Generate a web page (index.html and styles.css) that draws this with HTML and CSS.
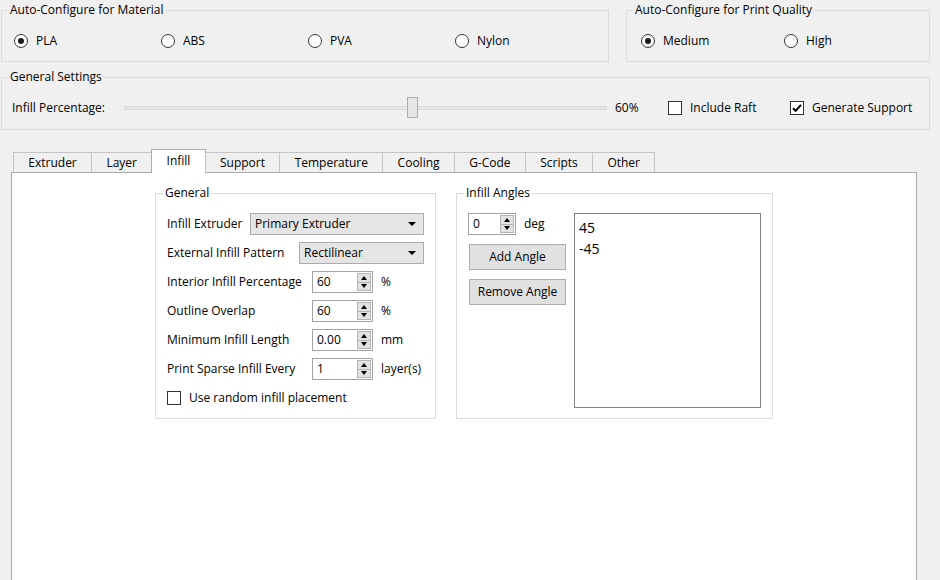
FILE: index.html
```html
<!DOCTYPE html>
<html lang="en">
<head>
  <meta charset="UTF-8">
  <title>Print Settings - Infill</title>
  <link rel="stylesheet" href="styles.css">
</head>
<body>
<div class="window">

  <div class="top-row">
    <fieldset class="group material">
      <legend>Auto-Configure for Material</legend>
      <div class="radio-row">
        <span class="radio"><span class="circle on"></span>PLA</span>
        <span class="radio"><span class="circle"></span>ABS</span>
        <span class="radio"><span class="circle"></span>PVA</span>
        <span class="radio"><span class="circle"></span>Nylon</span>
      </div>
    </fieldset>

    <fieldset class="group quality">
      <legend>Auto-Configure for Print Quality</legend>
      <div class="radio-row">
        <span class="radio"><span class="circle on"></span>Medium</span>
        <span class="radio"><span class="circle"></span>High</span>
      </div>
    </fieldset>
  </div>

  <fieldset class="group general-settings">
    <legend>General Settings</legend>
    <div class="settings-row">
      <span class="slider-label">Infill Percentage:</span>
      <div class="slider">
        <div class="groove"></div>
        <div class="handle"></div>
      </div>
      <span class="slider-value">60%</span>
      <span class="check raft"><span class="box"></span>Include Raft</span>
      <span class="check">
        <span class="box">
          <svg width="12" height="12" viewBox="0 0 12 12"><path d="M2 6.2 L4.6 8.8 L10 2.8" fill="none" stroke="#000" stroke-width="2"/></svg>
        </span>Generate Support
      </span>
    </div>
  </fieldset>

  <div class="tabs">
    <div class="tab">Extruder</div>
    <div class="tab">Layer</div>
    <div class="tab active">Infill</div>
    <div class="tab">Support</div>
    <div class="tab">Temperature</div>
    <div class="tab">Cooling</div>
    <div class="tab">G-Code</div>
    <div class="tab">Scripts</div>
    <div class="tab">Other</div>
  </div>

  <div class="tab-pane">

    <fieldset class="group inner general">
      <legend>General</legend>
      <div class="form">
        <div class="combo-row">
          <span>Infill Extruder</span>
          <div class="combo wide">Primary Extruder</div>
        </div>
        <div class="combo-row">
          <span>External Infill Pattern</span>
          <div class="combo narrow">Rectilinear</div>
        </div>
        <div class="spin-row">
          <span>Interior Infill Percentage</span>
          <div class="spin"><span class="spin-text">60</span><span class="spin-buttons"><span class="up"></span><span class="down"></span></span></div>
          <span>%</span>
        </div>
        <div class="spin-row">
          <span>Outline Overlap</span>
          <div class="spin"><span class="spin-text">60</span><span class="spin-buttons"><span class="up"></span><span class="down"></span></span></div>
          <span>%</span>
        </div>
        <div class="spin-row">
          <span>Minimum Infill Length</span>
          <div class="spin"><span class="spin-text">0.00</span><span class="spin-buttons"><span class="up"></span><span class="down"></span></span></div>
          <span>mm</span>
        </div>
        <div class="spin-row">
          <span>Print Sparse Infill Every</span>
          <div class="spin"><span class="spin-text">1</span><span class="spin-buttons"><span class="up"></span><span class="down"></span></span></div>
          <span>layer(s)</span>
        </div>
        <div class="check check-row"><span class="box"></span>Use random infill placement</div>
      </div>
    </fieldset>

    <fieldset class="group inner angles">
      <legend>Infill Angles</legend>
      <div class="angles-body">
        <div class="angle-col">
          <div class="angle-spin-row">
            <div class="spin small"><span class="spin-text">0</span><span class="spin-buttons"><span class="up"></span><span class="down"></span></span></div>
            <span>deg</span>
          </div>
          <div class="btn">Add Angle</div>
          <div class="btn">Remove Angle</div>
        </div>
        <div class="angle-list">
          <div class="angle-item">45</div>
          <div class="angle-item">-45</div>
        </div>
      </div>
    </fieldset>

  </div>
</div>
</body>
</html>
```

FILE: styles.css
```css
* {
  box-sizing: border-box;
}
body {
  margin: 0;
  background: #f0f0f0;
  font-family: "Open Sans", "Segoe UI", Arial, sans-serif;
  font-size: 12px;
  line-height: 16px;
  color: #000;
  height: 580px;
  overflow: hidden;
}
.window {
  padding: 2px 0 0 1px;
}

/* group boxes */
.group {
  margin: 0;
  padding: 0 10px;
  border: 1px solid #dcdcdc;
  min-width: 0;
}
.group legend {
  padding: 0 2px;
  margin-left: -4px;
  line-height: 16px;
}
.top-row {
  display: flex;
  gap: 17px;
}
.material {
  width: 608px;
  padding-top: 15px;
  padding-bottom: 12px;
}
.quality {
  width: 304px;
  padding-top: 15px;
  padding-bottom: 12px;
}

/* radio buttons */
.radio-row {
  display: grid;
  grid-template-columns: repeat(4, 147px);
  padding-left: 2px;
}
.quality .radio-row {
  grid-template-columns: repeat(2, 143px);
  padding-left: 4px;
}
.radio {
  display: flex;
  align-items: center;
  gap: 8px;
  height: 16px;
}
.circle {
  width: 14px;
  height: 14px;
  border: 1px solid #333;
  border-radius: 50%;
  background: #fff;
  display: flex;
  align-items: center;
  justify-content: center;
}
.circle.on::after {
  content: "";
  width: 6px;
  height: 6px;
  border-radius: 50%;
  background: #1b1b1b;
}

/* general settings */
.general-settings {
  width: 929px;
  margin-top: 7px;
  padding-top: 12px;
  padding-bottom: 10px;
}
.settings-row {
  display: flex;
  align-items: center;
  height: 22px;
}
.slider-label {
  width: 112px;
}
.slider {
  width: 483px;
  height: 22px;
  position: relative;
  display: flex;
  align-items: center;
}
.groove {
  flex: 1;
  height: 4px;
  border: 1px solid #d9d9d9;
  background: #e7e7e7;
}
.handle {
  position: absolute;
  left: 283px;
  top: 0;
  width: 11px;
  height: 21px;
  border: 1px solid #acacac;
  background: #e6e6e6;
}
.slider-value {
  width: 61px;
  padding-left: 8px;
}
.check {
  display: flex;
  align-items: center;
  gap: 8px;
}
.raft {
  width: 122px;
}
.box {
  width: 14px;
  height: 14px;
  border: 1px solid #333;
  background: #fff;
  display: flex;
  align-items: center;
  justify-content: center;
}

/* tabs */
.tabs {
  display: flex;
  align-items: flex-end;
  height: 24px;
  margin: 19px 0 0 12px;
  position: relative;
  z-index: 1;
}
.tab {
  height: 20px;
  line-height: 19px;
  padding: 0 14.3px;
  margin-left: -1px;
  margin-bottom: 1px;
  border: 1px solid #c4c4c4;
  border-bottom: none;
  background: #f0f0f0;
}
.tab:first-child {
  margin-left: 0;
}
.tab.active {
  height: 24px;
  line-height: 22px;
  margin-bottom: 0;
  background: #fff;
  border-color: #adadad;
}
.tab-pane {
  width: 906px;
  height: 430px;
  margin: -1px 0 0 10px;
  padding-top: 12px;
  border: 1px solid #a9a9a9;
  background: #fff;
  display: flex;
  justify-content: center;
  align-items: flex-start;
  gap: 20px;
}

/* inner groups */
.inner {
  height: 234px;
  padding: 12px 11px 0;
}
.general {
  width: 281px;
}
.angles {
  width: 317px;
}
.form {
  display: flex;
  flex-direction: column;
  gap: 7px;
}
.combo-row {
  display: flex;
  align-items: center;
  justify-content: space-between;
  height: 22px;
}
.combo {
  height: 22px;
  border: 1px solid #acacac;
  background: #e5e5e5;
  display: flex;
  align-items: center;
  justify-content: space-between;
  padding: 0 7px 0 4px;
}
.combo::after {
  content: "";
  border-left: 4px solid transparent;
  border-right: 4px solid transparent;
  border-top: 4px solid #000;
}
.combo.wide {
  width: 174px;
}
.combo.narrow {
  width: 125px;
}
.spin-row {
  display: grid;
  grid-template-columns: 137px 61px auto;
  column-gap: 8px;
  align-items: center;
  height: 22px;
}
.spin {
  display: flex;
  align-items: center;
  height: 22px;
  border: 1px solid #a3a3a3;
  background: #fff;
  padding: 1px 1px 1px 4px;
}
.spin.small {
  width: 48px;
}
.spin-text {
  flex: 1;
}
.spin-buttons {
  display: flex;
  flex-direction: column;
  width: 14px;
  height: 100%;
}
.spin-buttons span {
  flex: 1;
  background: #e3e3e3;
  border: 1px solid #b4b4b4;
  display: flex;
  align-items: center;
  justify-content: center;
}
.spin-buttons .down {
  border-top: none;
}
.up::after {
  content: "";
  border-left: 3px solid transparent;
  border-right: 3px solid transparent;
  border-bottom: 4px solid #000;
}
.down::after {
  content: "";
  border-left: 3px solid transparent;
  border-right: 3px solid transparent;
  border-top: 4px solid #000;
}
.check-row {
  height: 22px;
}

/* infill angles */
.angles-body {
  display: flex;
  gap: 8px;
}
.angle-col {
  width: 98px;
  display: flex;
  flex-direction: column;
}
.angle-spin-row {
  display: flex;
  align-items: center;
  gap: 8px;
  height: 22px;
}
.btn {
  width: 97px;
  height: 26px;
  margin: 9px 0 0 1px;
  border: 1px solid #adadad;
  background: #e1e1e1;
  text-align: center;
  line-height: 24px;
}
.angle-list {
  width: 187px;
  height: 195px;
  border: 1px solid #828282;
  background: #fff;
  padding: 3px 4px;
  font-size: 14px;
  line-height: 21px;
}
```
